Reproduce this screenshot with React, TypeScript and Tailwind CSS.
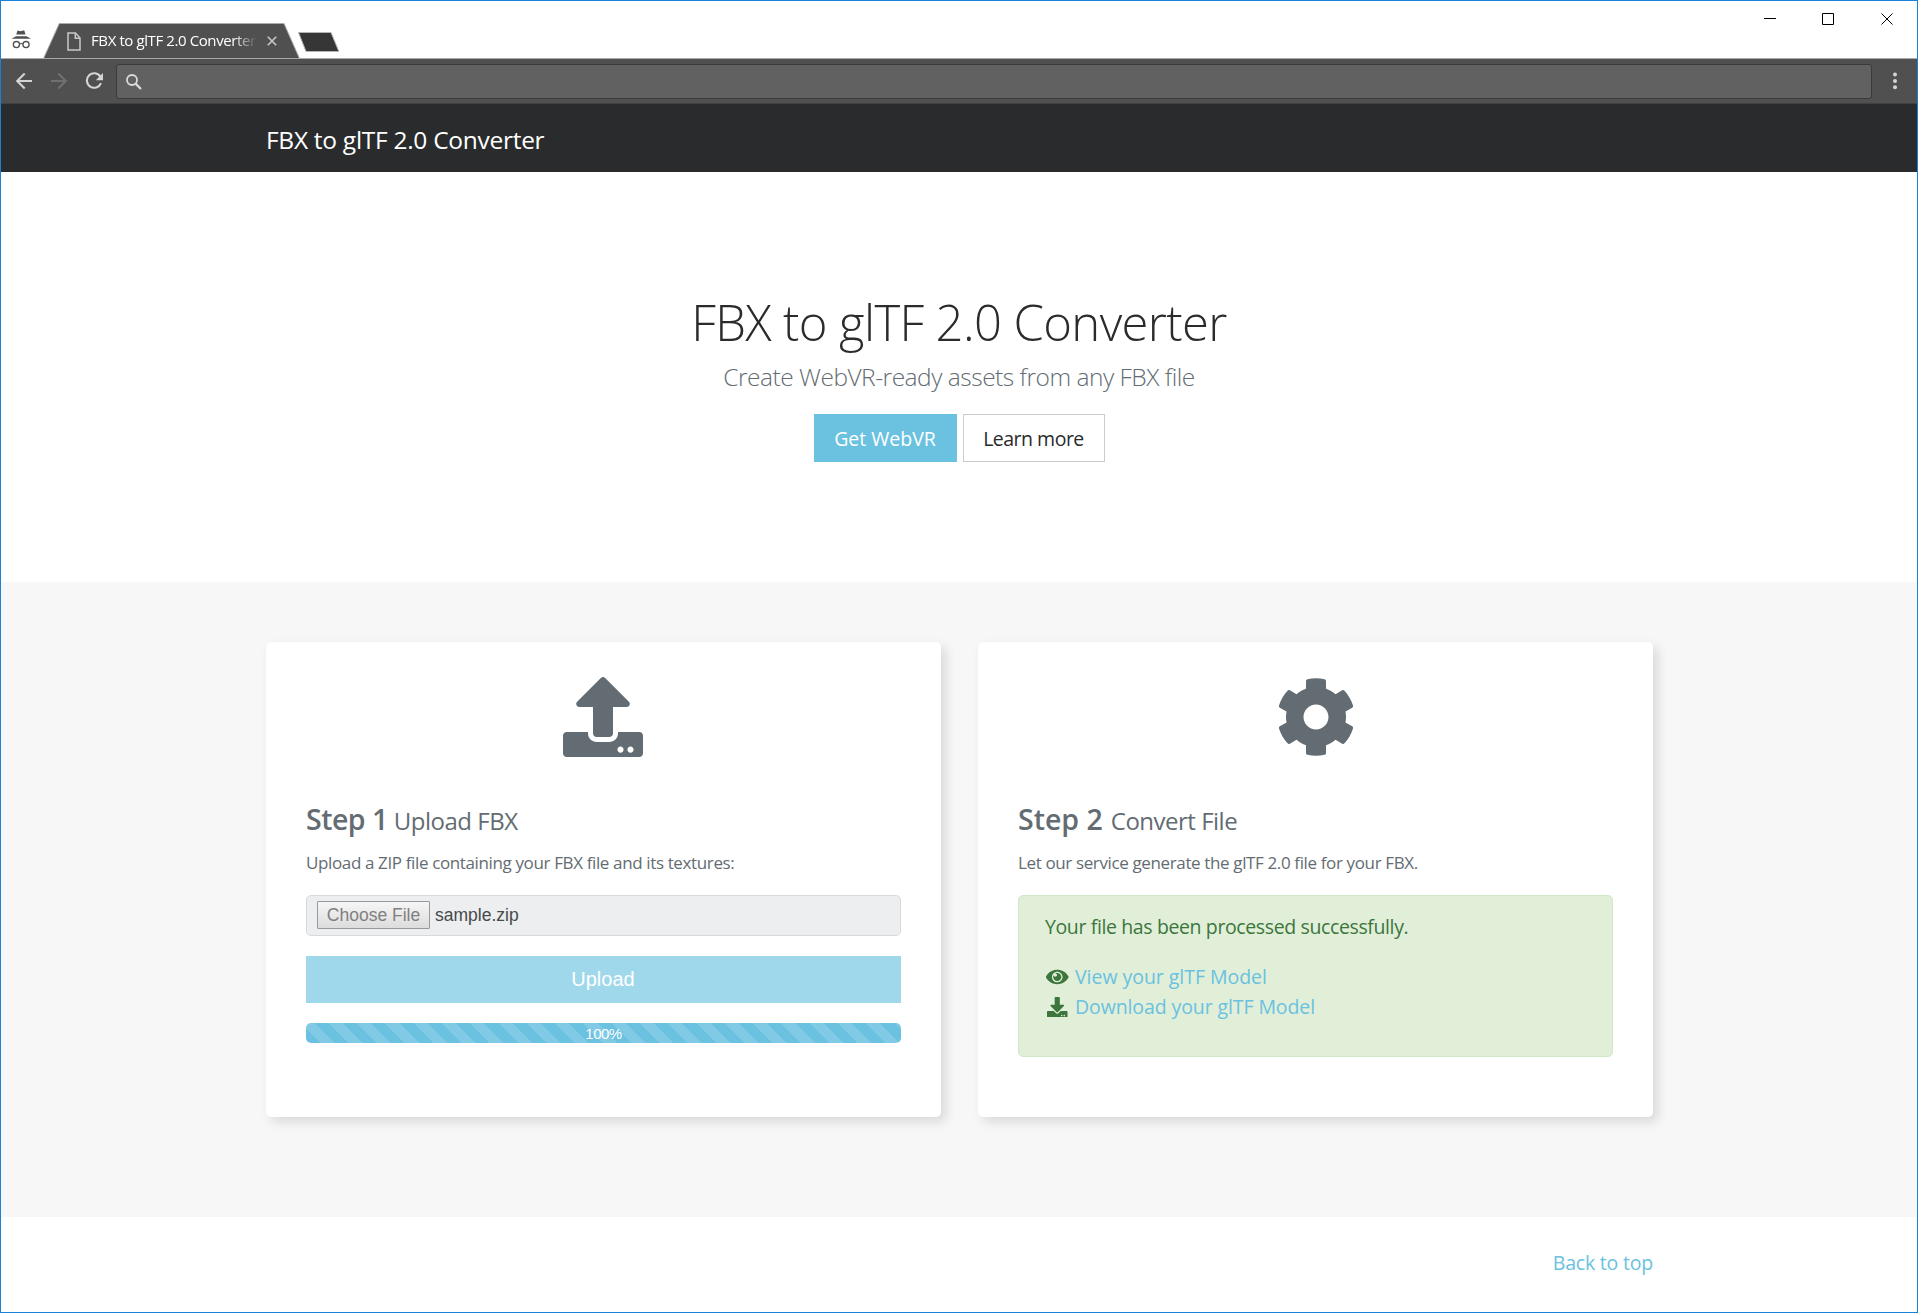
import { ReactNode } from "react";
import { FaCog, FaDownload, FaUpload } from "react-icons/fa";

function BrowserChrome() {
  return (
    <header className="shrink-0">
      <div className="relative flex h-[58px] items-start bg-white">
        <svg className="absolute left-0 top-0" width="1916" height="58" viewBox="1 1 1916 58" fill="none">
          <path d="M0 58.5H43.5L59.3 23.5H284L299.5 58.5H1918" fill="#505050" stroke="#ababab" />
          <path d="M298.5 32.5H331L338.9 51.5H306Z" fill="#363636" stroke="#b4b4b4" strokeLinejoin="round" />
          <path d="M17.5 30.5L20.5 31.3L24.2 30.3L25.5 34.4H16.2Z" fill="#505050" />
          <path d="M11.5 38.8L16 36.3H26.5L31 38.8Z" fill="#505050" />
          <circle cx="16.4" cy="44.6" r="3.1" stroke="#505050" strokeWidth="1.3" />
          <circle cx="26" cy="44.6" r="3.1" stroke="#505050" strokeWidth="1.3" />
          <path d="M19.5 44q1.7-1 3.4 0" stroke="#505050" strokeWidth="1.2" />
        </svg>
        <div className="relative ml-[66px] mt-[29px] flex h-[22px] items-center">
          <svg width="14" height="19" viewBox="0 0 14 19" fill="none" stroke="#c8c8c8" strokeWidth="1.5">
            <path d="M1 1H8.5L13 6V18H1Z" />
            <path d="M8.3 1V6.3H13" />
          </svg>
          <div className="mb-1 ml-2.5 h-[22px] w-[167px] overflow-hidden [mask-image:linear-gradient(to_right,black_142px,transparent_166px)]">
            <span className="whitespace-nowrap text-[15px] leading-[22px] tracking-[-0.4px] text-white">FBX to glTF 2.0 Converter</span>
          </div>
          <svg className="ml-[9px]" width="10" height="10" viewBox="0 0 10 10" stroke="#c8c8c8" strokeWidth="1.6">
            <path d="M.8.8L9.2 9.2M9.2.8L.8 9.2" />
          </svg>
        </div>
        <svg className="ml-auto mr-[23px] mt-3" width="130" height="13" viewBox="0 0 130 13" fill="none" stroke="#000">
          <path d="M0 5.5H12" />
          <path d="M58.5.5H69.5V11.5H58.5Z" />
          <path d="M117.5.5L128.5 11.5M128.5.5L117.5 11.5" />
        </svg>
      </div>
      <div className="flex h-[45px] items-center border-b border-[#414141] bg-[#505050]">
        <svg className="ml-[15px]" width="88" height="18" viewBox="16 72 88 18" fill="none" strokeWidth="2.1">
          <path d="M32 81H17.5M24.7 73.5L17.2 81L24.7 88.5" stroke="#d4d4d4" />
          <path d="M51 81H65.5M58.3 73.5L65.8 81L58.3 88.5" stroke="#707070" />
          <path d="M100.4 76.6A7.3 7.3 0 1 0 101 83.2" stroke="#d4d4d4" />
          <path d="M103 73V80.2H95.8Z" fill="#d4d4d4" />
        </svg>
        <div className="ml-3 flex h-[35px] flex-1 items-center rounded-[3px] border border-[#3a3a3a] bg-[#616161]">
          <svg className="ml-[9px] mt-px" width="16" height="16" viewBox="0 0 16 16" fill="none" stroke="#dcdcdc" strokeWidth="1.8">
            <circle cx="6" cy="6" r="5" />
            <path d="M9.6 9.6L15 15" strokeWidth="2.2" />
          </svg>
        </div>
        <svg className="ml-[21px] mr-[20px]" width="4" height="18" viewBox="0 0 4 18" fill="#d4d4d4">
          <circle cx="2" cy="2.6" r="2" />
          <circle cx="2" cy="9" r="2" />
          <circle cx="2" cy="15.2" r="2" />
        </svg>
      </div>
    </header>
  );
}

interface StepCardProps {
  icon: ReactNode;
  step: string;
  headingClass: string;
  title: string;
  text: string;
  children: ReactNode;
}

function StepCard({ icon, step, headingClass, title, text, children }: StepCardProps) {
  return (
    <section className="h-[475px] rounded-[5px] bg-white px-10 pt-[35px] text-[#636c72] shadow-[5px_5px_12px_rgba(0,0,0,0.12)]">
      <div className="flex h-20 justify-center text-[80px]">{icon}</div>
      <h2 className={`mt-[41px] flex h-[42px] items-baseline whitespace-nowrap text-[28.5px] font-semibold leading-[42px] ${headingClass}`}>
        {step}
        <small className="text-[24px] font-normal leading-[42px] tracking-[-0.5px]">{title}</small>
      </h2>
      <p className="mt-2.5 h-[26px] whitespace-nowrap text-[17px] leading-[26px] tracking-[-0.37px]">{text}</p>
      {children}
    </section>
  );
}

function Eye() {
  return (
    <svg className="h-5 w-[22.5px]" viewBox="0 0 576 512" fill="currentColor">
      <path d="M569.354 231.631C512.97 135.949 407.81 72 288 72 168.14 72 63.004 135.994 6.646 231.631a47.999 47.999 0 0 0 0 48.739C63.031 376.051 168.19 440 288 440c119.86 0 224.996-63.994 281.354-159.631a47.997 47.997 0 0 0 0-48.738zM288 392c-75.162 0-136-60.827-136-136 0-75.162 60.826-136 136-136 75.162 0 136 60.826 136 136 0 75.162-60.826 136-136 136zm104-136c0 57.438-46.562 104-104 104s-104-46.562-104-104c0-17.708 4.431-34.379 12.236-48.973l-.001.032c0 23.651 19.173 42.823 42.824 42.823s42.824-19.173 42.824-42.823c0-23.651-19.173-42.824-42.824-42.824l-.032.001C253.621 156.431 270.292 152 288 152c57.438 0 104 46.562 104 104z" />
    </svg>
  );
}

export default function App() {
  return (
    <div className="flex h-[1313px] w-[1918px] flex-col overflow-hidden border border-[#1a82d6] bg-white font-['Open_Sans',sans-serif]">
      <BrowserChrome />
      <nav className="h-[68px] shrink-0 bg-[#292b2c]">
        <div className="ml-[265px] flex h-full w-[1387px] items-center pt-[3px] text-white">
          <span className="whitespace-nowrap text-[24.5px] leading-[40px] tracking-[-0.28px]">FBX to glTF 2.0 Converter</span>
        </div>
      </nav>
      <main className="shrink-0">
        <section className="flex h-[410px] flex-col items-center pt-[120px]">
          <h1 className="h-[60px] whitespace-nowrap text-[49px] font-light leading-[60px] tracking-[-0.62px] text-[#292b2c]">FBX to glTF 2.0 Converter</h1>
          <p className="mt-[6px] h-[38px] whitespace-nowrap text-[24.5px] font-light leading-[38px] tracking-[-0.49px] text-[#636c72]">Create WebVR-ready assets from any FBX file</p>
          <div className="mt-[18px] flex gap-1.5 text-[19.5px]">
            <button className="flex h-12 w-[143px] items-center justify-center whitespace-nowrap bg-[#6ac1e0] pt-0.5 text-white">Get WebVR</button>
            <button className="flex h-12 w-[142px] items-center justify-center whitespace-nowrap border border-[#ccc] bg-white pt-0.5 tracking-[-0.5px] text-[#292b2c]">Learn more</button>
          </div>
        </section>
        <section className="h-[635px] bg-[#f7f7f7] pt-[60px]">
          <div className="ml-[265px] grid w-[1387px] grid-cols-[675px_675px] gap-[37px]">
            <StepCard icon={<FaUpload className="mr-px" />} step="Step 1" headingClass="gap-1.5 tracking-[-0.5px]" title="Upload FBX" text="Upload a ZIP file containing your FBX file and its textures:">
              <div className="mt-[19px] flex h-[41px] items-center rounded-[5px] border border-[#d9d9d9] bg-[#eceeef] pl-2.5 font-['Liberation_Sans',sans-serif] text-[17.5px]">
                <button className="mb-px flex h-7 w-[113px] items-center justify-center whitespace-nowrap rounded-[1px] border border-[#999] bg-linear-to-b from-[#f6f6f6] to-[#dcdcdc] pt-px text-[#808080]">Choose File</button>
                <span className="ml-[5px] text-[#464a4c]">sample.zip</span>
              </div>
              <button className="mt-5 flex h-[47px] w-full items-center justify-center bg-[#9fd8eb] pb-0.5 pr-px font-['Liberation_Sans',sans-serif] text-[20px] text-white">Upload</button>
              <div className="mt-5 flex h-5 items-center justify-center rounded-[5px] bg-[repeating-linear-gradient(45deg,#6ac1e0_0_10px,#80cae5_10px_20px)] pt-0.5 font-['Liberation_Sans',sans-serif] text-[15px] leading-5 tracking-[-0.5px] text-white">100%</div>
            </StepCard>
            <StepCard icon={<FaCog />} step="Step 2" headingClass="gap-2 tracking-[0px]" title="Convert File" text="Let our service generate the glTF 2.0 file for your FBX.">
              <div className="mt-[19px] h-[162px] whitespace-nowrap rounded-[5px] border border-[#d0e9c6] bg-[#e1efd8] pl-[26px] pt-4 text-[19.5px] leading-[30px] text-[#3c763d]">
                <p className="tracking-[-0.38px]">Your file has been processed successfully.</p>
                <ul className="mt-5 text-[#6ac1e0]">
                  <li className="flex h-[30px] items-center gap-[5px]">
                    <span className="flex w-[25px] justify-center text-[#3c763d]"><Eye /></span>
                    <a className="tracking-[-0.04px]">View your glTF Model</a>
                  </li>
                  <li className="flex h-[30px] items-center gap-[5px]">
                    <span className="flex w-[25px] justify-center text-[#3c763d]"><FaDownload className="text-[20.5px]" /></span>
                    <a className="tracking-[-0.1px]">Download your glTF Model</a>
                  </li>
                </ul>
              </div>
            </StepCard>
          </div>
        </section>
      </main>
      <footer className="ml-[265px] flex w-[1387px] justify-end pt-[31px]">
        <a className="whitespace-nowrap text-[19.5px] leading-[30px] tracking-[-0.2px] text-[#6ac1e0]">Back to top</a>
      </footer>
    </div>
  );
}
